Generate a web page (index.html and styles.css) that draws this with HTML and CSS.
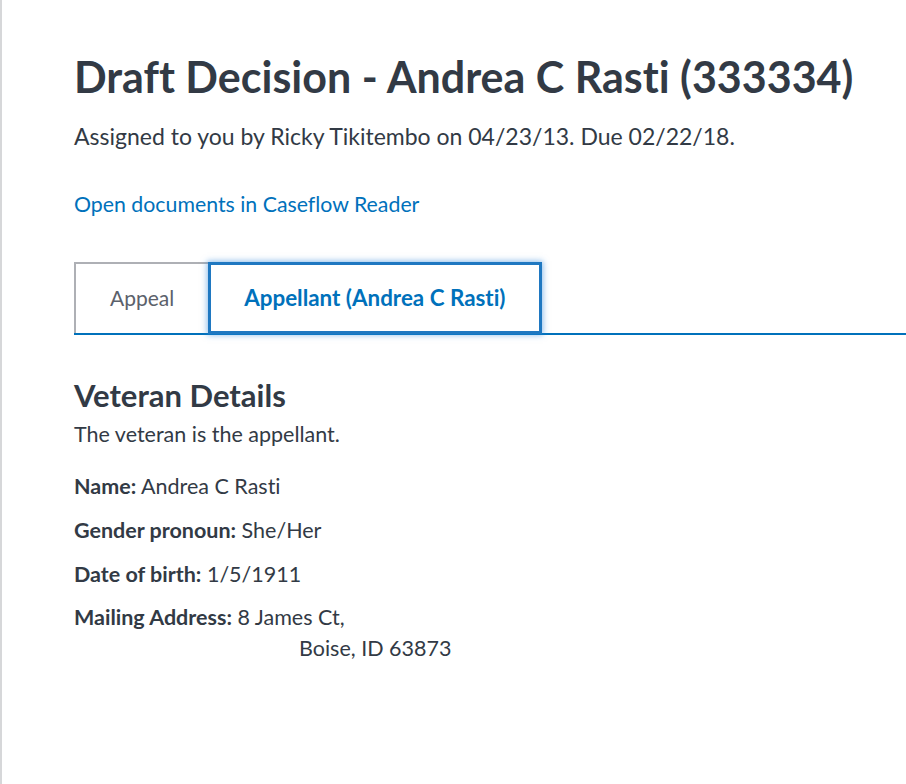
FILE: index.html
```html
<!DOCTYPE html>
<html lang="en">
<head>
  <meta charset="UTF-8" />
  <meta name="viewport" content="width=device-width, initial-scale=1.0"/>
  <title>Draft Decision - Andrea C Rasti</title>
  <link rel="stylesheet" href="styles.css">
</head>
<body>

  <div class="page">
    <h1 class="case-title">Draft Decision - Andrea C Rasti (333334)</h1>
    <p class="assigned">Assigned to you by Ricky Tikitembo on 04/23/13. Due 02/22/18.</p>

    <a class="reader-link" href="#">Open documents in Caseflow Reader</a>

    <ul class="tabs">
      <li class="tab">Appeal</li>
      <li class="tab tab-active">Appellant (Andrea C Rasti)</li>
    </ul>

    <section class="details">
      <h2>Veteran Details</h2>
      <p class="note">The veteran is the appellant.</p>

      <div class="field"><b>Name:</b> Andrea C Rasti</div>
      <div class="field"><b>Gender pronoun:</b> She/Her</div>
      <div class="field"><b>Date of birth:</b> 1/5/1911</div>
      <div class="field"><b>Mailing Address:</b> 8 James Ct,</div>
      <div class="address-line">Boise, ID 63873</div>
    </section>
  </div>

</body>
</html>
```
FILE: styles.css
```css
:root {
  --text-dark: #323a45;
  --text-gray: #5b616b;
  --link-blue: #0071bb;
  --border-gray: #aeb0b5;
  --rail-gray: #d6d7d9;
}

body {
  font-family: 'Lato', sans-serif;
  font-variant-ligatures: no-common-ligatures;
  color: var(--text-dark);
  background: #ffffff;
  margin: 0;
}

.page {
  border-left: 2px solid var(--rail-gray);
  padding: 51px 0 0 72px;
  min-height: 100vh;
  box-sizing: border-box;
}

.case-title {
  font-size: 43px;
  font-weight: 700;
  line-height: 1.2;
  margin: 0;
}

.assigned {
  font-size: 23px;
  line-height: 1.2;
  margin: 20px 0 0;
}

.reader-link {
  display: block;
  width: max-content;
  font-size: 21.3px;
  line-height: 1.2;
  color: var(--link-blue);
  text-decoration: none;
  margin-top: 42px;
}

.tabs {
  display: flex;
  align-items: flex-end;
  list-style: none;
  margin: 44px 0 0;
  padding: 0;
  border-bottom: 2px solid var(--link-blue);
}

.tab {
  font-size: 21px;
  line-height: 1.2;
  color: var(--text-gray);
  padding: 21px 34px 23px;
  border-top: 2px solid var(--border-gray);
  border-left: 2px solid var(--border-gray);
}

.tab-active {
  font-size: 22.4px;
  font-weight: 700;
  color: var(--link-blue);
  padding: 20px 33px 19px;
  border: 3px solid #1f78c1;
  margin-bottom: -1px;
  box-shadow: 0 0 6px 1px rgba(46, 133, 216, 0.55);
  position: relative;
}

.details {
  font-size: 21.5px;
  line-height: 1.2;
}

.details h2 {
  font-size: 31px;
  font-weight: 700;
  line-height: 1.2;
  margin: 42px 0 0;
}

.note {
  margin: 8px 0 26px;
}

.field {
  margin-top: 18px;
}

.field b {
  font-weight: 700;
}

.address-line {
  padding-left: 225px;
  margin-top: 5px;
}
```
